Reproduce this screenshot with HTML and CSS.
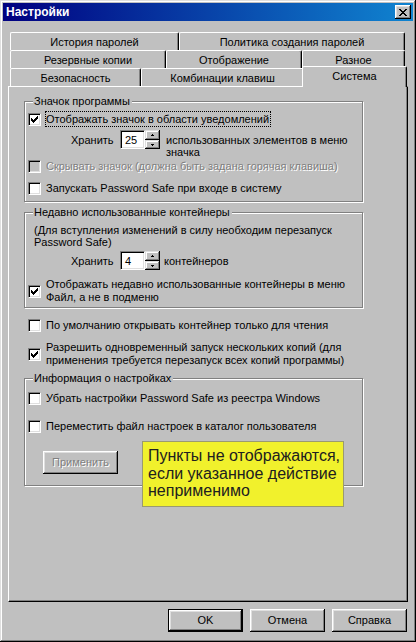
FILE: index.html
```html
<!DOCTYPE html>
<html lang="ru">
<head>
<meta charset="utf-8">
<title>Настройки</title>
<link rel="stylesheet" href="styles.css">
</head>
<body>
<div class="window">
  <div class="titlebar">
    <span class="title">Настройки</span>
    <span class="close"><svg width="8" height="7" viewBox="0 0 8 7" shape-rendering="crispEdges"><path d="M0 0h2v1h-2zM6 0h2v1h-2zM1 1h2v1h-2zM5 1h2v1h-2zM2 2h4v1h-4zM3 3h2v1h-2zM2 4h4v1h-4zM1 5h2v1h-2zM5 5h2v1h-2zM0 6h2v1h-2zM6 6h2v1h-2z" fill="#000"/></svg></span>
  </div>
  <div class="client">
    <div class="tabs">
      <div class="tabrow">
        <div class="tab t-hist">История паролей</div>
        <div class="tab t-policy">Политика создания паролей</div>
      </div>
      <div class="tabrow">
        <div class="tab t-backup">Резервные копии</div>
        <div class="tab t-display">Отображение</div>
        <div class="tab t-misc">Разное</div>
      </div>
      <div class="tabrow last">
        <div class="tab t-sec">Безопасность</div>
        <div class="tab t-keys">Комбинации клавиш</div>
        <div class="tab t-sys selected">Система</div>
      </div>
    </div>
    <div class="panel">
      <div class="group g1">
        <div class="gtitle">Значок программы</div>
        <div class="cbrow r-tray">
          <span class="cb"><svg width="7" height="7" viewBox="0 0 7 7" shape-rendering="crispEdges"><path d="M0 2h1v1h1v1h1v-1h1v-1h1v-1h1v-1h1v3h-1v1h-1v1h-1v1h-1v1h-1v-1h-1v-1h-1z" fill="#000"/></svg></span>
          <span class="lbl focus">Отображать значок в области уведомлений</span>
        </div>
        <div class="spinrow s1">
          <span class="spinlbl">Хранить</span>
          <span class="edit">25</span>
          <span class="spin">
            <span class="sbtn up"><svg width="3" height="2" viewBox="0 0 3 2" shape-rendering="crispEdges"><path d="M1 0h1v1h1v1h-3v-1h1z" fill="#000"/></svg></span>
            <span class="sbtn down"><svg width="3" height="2" viewBox="0 0 3 2" shape-rendering="crispEdges"><path d="M0 0h3v1h-1v1h-1v-1h-1z" fill="#000"/></svg></span>
          </span>
          <span class="spintext t1">использованных элементов в меню<br>значка</span>
        </div>
        <div class="cbrow disabled r-hide">
          <span class="cb"></span>
          <span class="lbl">Скрывать значок (должна быть задана горячая клавиша)</span>
        </div>
        <div class="cbrow r-start">
          <span class="cb"></span>
          <span class="lbl">Запускать Password Safe при входе в систему</span>
        </div>
      </div>

      <div class="group g2">
        <div class="gtitle">Недавно использованные контейнеры</div>
        <div class="note">(Для вступления изменений в силу необходим перезапуск<br>Password Safe)</div>
        <div class="spinrow s2">
          <span class="spinlbl">Хранить</span>
          <span class="edit">4</span>
          <span class="spin">
            <span class="sbtn up"><svg width="3" height="2" viewBox="0 0 3 2" shape-rendering="crispEdges"><path d="M1 0h1v1h1v1h-3v-1h1z" fill="#000"/></svg></span>
            <span class="sbtn down"><svg width="3" height="2" viewBox="0 0 3 2" shape-rendering="crispEdges"><path d="M0 0h3v1h-1v1h-1v-1h-1z" fill="#000"/></svg></span>
          </span>
          <span class="spintext t2">контейнеров</span>
        </div>
        <div class="cbrow two r-mru">
          <span class="cb"><svg width="7" height="7" viewBox="0 0 7 7" shape-rendering="crispEdges"><path d="M0 2h1v1h1v1h1v-1h1v-1h1v-1h1v-1h1v3h-1v1h-1v1h-1v1h-1v1h-1v-1h-1v-1h-1z" fill="#000"/></svg></span>
          <span class="lbl">Отображать недавно использованные контейнеры в меню<br>Файл, а не в подменю</span>
        </div>
      </div>

      <div class="cbrow solo r-ro">
        <span class="cb"></span>
        <span class="lbl">По умолчанию открывать контейнер только для чтения</span>
      </div>
      <div class="cbrow solo two r-multi">
        <span class="cb"><svg width="7" height="7" viewBox="0 0 7 7" shape-rendering="crispEdges"><path d="M0 2h1v1h1v1h1v-1h1v-1h1v-1h1v-1h1v3h-1v1h-1v1h-1v1h-1v1h-1v-1h-1v-1h-1z" fill="#000"/></svg></span>
        <span class="lbl">Разрешить одновременный запуск нескольких копий (для<br>применения требуется перезапуск всех копий программы)</span>
      </div>

      <div class="group g3">
        <div class="gtitle">Информация о настройках</div>
        <div class="cbrow r-reg">
          <span class="cb"></span>
          <span class="lbl">Убрать настройки Password Safe из реестра Windows</span>
        </div>
        <div class="cbrow r-move">
          <span class="cb"></span>
          <span class="lbl">Переместить файл настроек в каталог пользователя</span>
        </div>
        <div class="btn apply disabled-btn">Применить</div>
      </div>
    </div>
    <div class="buttons">
      <div class="btn default">OK</div>
      <div class="btn">Отмена</div>
      <div class="btn">Справка</div>
    </div>
  </div>
  <div class="tooltip">Пункты не отображаются,<br>если указанное действие<br>неприменимо</div>
</div>
</body>
</html>
```

FILE: styles.css
```css
* { box-sizing: border-box; margin: 0; padding: 0; }
html, body { width: 416px; height: 642px; overflow: hidden; }
body {
  background: #c0c0c0;
  font-family: "Liberation Sans", Arial, sans-serif;
  font-size: 11px;
  line-height: 13px;
  color: #000;
}
.window {
  position: relative;
  width: 416px;
  height: 642px;
  padding: 3px;
  background: #c0c0c0;
  box-shadow: inset -1px -1px #000, inset 1px 1px #dfdfdf, inset -2px -2px #808080, inset 2px 2px #fff;
}
.titlebar {
  height: 18px;
  display: flex;
  align-items: center;
  justify-content: space-between;
  padding: 0 2px 0 3px;
  background: linear-gradient(90deg, #000080, #1084d0);
}
.title { color: #fff; font-weight: bold; font-size: 12px; }
.close {
  width: 16px; height: 14px;
  display: flex; align-items: center; justify-content: center;
  background: #c0c0c0;
  box-shadow: inset -1px -1px #000, inset 1px 1px #fff, inset -2px -2px #808080, inset 2px 2px #dfdfdf;
}
.close svg { display: block; }
.client { padding: 11px 5px 0 5px; }

/* tabs */
.tabs { margin: 0 3px 0 2px; }
.tabrow { display: flex; height: 18px; align-items: flex-end; }
.tab {
  flex: none;
  height: 18px;
  text-align: center;
  line-height: 16px;
  padding-top: 1px;
  background: #c0c0c0;
  border-top: 1px solid #fff;
  border-left: 1px solid #fff;
  border-right: 1px solid #000;
  border-radius: 2px 2px 0 0;
  box-shadow: inset -1px 0 #808080;
}
.t-hist { width: 169px; }
.t-policy { width: 226px; }
.t-backup { width: 156px; }
.t-display { width: 136px; }
.t-misc { width: 103px; }
.t-sec { width: 131px; }
.t-keys { width: 163px; }
.t-sys { width: 101px; }
.tab.selected {
  position: relative;
  z-index: 2;
  height: 21px;
  margin: -2px -2px -1px -2px;
  width: 105px;
  padding-top: 1px;
  line-height: 16px;
}

/* panel */
.panel {
  height: 516px;
  padding: 14px 0 0 15px;
  border-top: 1px solid #fff;
  border-left: 1px solid #fff;
  border-right: 1px solid #000;
  border-bottom: 1px solid #000;
  box-shadow: inset -1px -1px #808080;
}
.group {
  width: 339px;
  border: 1px solid #808080;
  box-shadow: inset 1px 1px #fff, 1px 1px #fff;
  padding-left: 3px;
}
.gtitle {
  display: block;
  width: max-content;
  height: 13px;
  margin: -7px 0 0 5px;
  padding: 0 2px 0 1px;
  background: #c0c0c0;
}
.g1 { padding-bottom: 6px; }
.g2 { margin-top: 10px; padding-bottom: 3px; }
.g3 { margin-top: 11px; padding-bottom: 11px; }

.cbrow { display: flex; align-items: center; white-space: nowrap; }
.cbrow.solo { margin-left: 4px; }
.cb {
  flex: none;
  width: 13px; height: 13px;
  display: flex; align-items: center; justify-content: center;
  background: #fff;
  border: 1px solid;
  border-color: #808080 #fff #fff #808080;
  box-shadow: inset 1px 1px #000, inset -1px -1px #dfdfdf;
}
.cb svg { display: block; }
.lbl { margin-left: 5px; }
.lbl.focus {
  margin-left: 4px;
  border: 1px dotted #000;
  line-height: 14px;
  padding: 0 1px 0 0;
}
.disabled .cb { background: #c0c0c0; }
.disabled .lbl { color: #808080; text-shadow: 1px 1px #fff; }

.r-tray { margin-top: 3px; }
.r-hide { margin-top: 2px; }
.r-start { margin-top: 9px; }
.r-mru { margin-top: 8px; }
.r-ro { margin-top: 11px; }
.r-multi { margin-top: 9px; }
.r-reg { margin-top: 7px; }
.r-move { margin-top: 15px; }

/* spin rows */
.spinrow { display: flex; align-items: flex-start; padding-left: 43px; white-space: nowrap; }
.s1 { margin-top: 3px; }
.s2 { margin-top: 3px; }
.spinlbl { width: 49px; margin-top: 4px; }
.edit {
  width: 25px; height: 19px;
  background: #fff;
  padding: 3px 0 0 4px;
  line-height: 13px;
  border: 1px solid;
  border-color: #808080 #fff #fff #808080;
  box-shadow: inset 1px 1px #000, inset -1px -1px #dfdfdf;
}
.spin { display: flex; flex-direction: column; width: 15px; height: 19px; }
.sbtn {
  display: flex; align-items: center; justify-content: center;
  background: #c0c0c0;
  box-shadow: inset -1px -1px #000, inset 1px 1px #dfdfdf, inset -2px -2px #808080, inset 2px 2px #fff;
}
.sbtn.up { height: 10px; }
.sbtn.down { height: 9px; }
.sbtn svg { display: block; }
.spintext { margin-top: 4px; line-height: 12px; }
.t1 { margin-left: 6px; }
.t2 { margin-left: 4px; }
.note { margin: 5px 0 0 6px; line-height: 12px; white-space: nowrap; }

/* buttons */
.btn {
  width: 75px; height: 23px;
  display: flex; align-items: center; justify-content: center;
  background: #c0c0c0;
  box-shadow: inset -1px -1px #000, inset 1px 1px #fff, inset -2px -2px #808080, inset 2px 2px #dfdfdf;
}
.btn.default {
  border: 1px solid #000;
  box-shadow: inset -1px -1px #000, inset 1px 1px #fff, inset -2px -2px #808080, inset 2px 2px #dfdfdf;
}
.apply { margin: 18px 0 0 15px; }
.disabled-btn { color: #808080; text-shadow: 1px 1px #fff; }
.buttons {
  display: flex;
  justify-content: flex-end;
  gap: 7px;
  margin-top: 7px;
  padding-right: 1px;
}

/* tooltip overlay */
.tooltip {
  position: absolute;
  left: 142px;
  top: 441px;
  width: 202px;
  height: 66px;
  padding: 5px 0 0 5px;
  background: #f1f12c;
  border: 1px solid #9a9a70;
  font-size: 16px;
  line-height: 17.5px;
  color: #202020;
  white-space: nowrap;
}
```
